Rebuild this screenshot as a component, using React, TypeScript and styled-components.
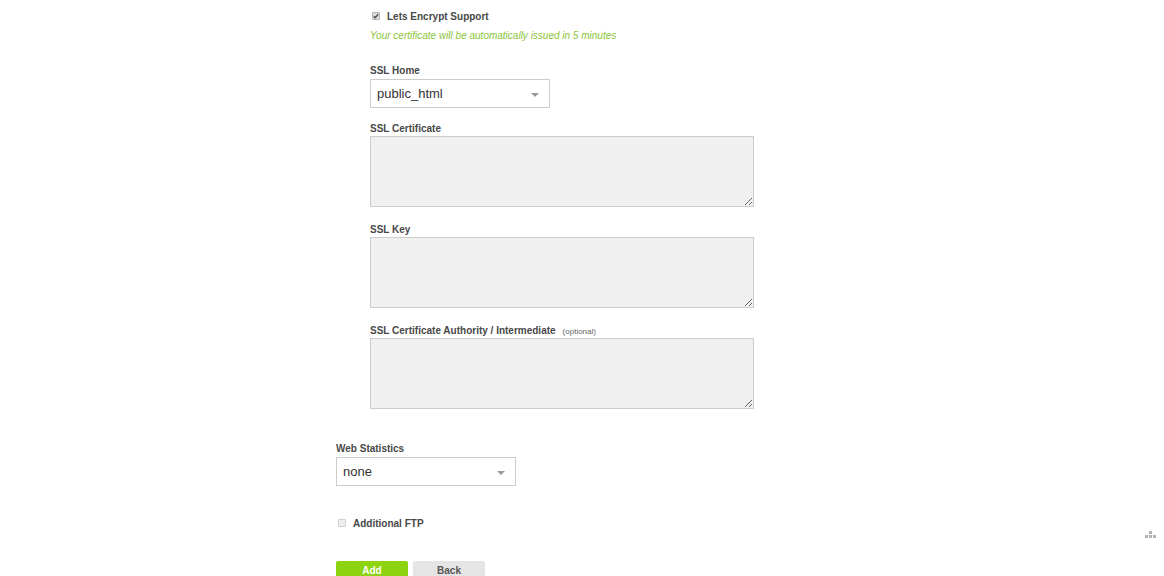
import * as React from 'react';
import styled, { createGlobalStyle } from 'styled-components';

const GlobalStyle = createGlobalStyle`
  html, body {
    margin: 0;
    padding: 0;
    background: #ffffff;
    font-family: "Liberation Sans", Arial, sans-serif;
    color: #444444;
  }
`;

const Page = styled.div`
  padding: 9px 0 40px 336px;
`;

const SslSection = styled.div`
  display: flex;
  flex-direction: column;
  padding-left: 34px;
  margin-bottom: 33px;
`;

const CheckRow = styled.label<{ $indent?: number }>`
  display: flex;
  align-items: center;
  gap: 7px;
  height: 14px;
  padding-left: ${({ $indent }) => $indent ?? 2}px;
  font-size: 10px;
  font-weight: bold;
  color: #484848;
`;

const CheckBox = styled.span<{ $checked?: boolean }>`
  position: relative;
  display: inline-flex;
  align-items: center;
  justify-content: center;
  width: 8px;
  height: 8px;
  box-sizing: border-box;
  border: 1px solid ${({ $checked }) => ($checked ? '#b5b5b5' : '#cfcfcf')};
  border-radius: 1px;
  background: ${({ $checked }) => ($checked ? '#dcdcdc' : '#eeeeee')};
`;

const Hint = styled.div`
  margin-top: 7px;
  font-size: 10px;
  line-height: 12px;
  font-style: italic;
  color: #8cc43a;
`;

const Field = styled.div<{ $top: number }>`
  display: flex;
  flex-direction: column;
  margin-top: ${({ $top }) => $top}px;
`;

const Label = styled.div`
  font-size: 10px;
  line-height: 12px;
  font-weight: bold;
  color: #484848;
  padding-top: 1px;
  margin-bottom: 1px;
`;

const Optional = styled.span`
  margin-left: 7px;
  font-size: 8px;
  line-height: 0;
  font-weight: normal;
  color: #666666;
`;

const SelectBox = styled.div`
  position: relative;
  display: flex;
  align-items: center;
  width: 180px;
  height: 29px;
  margin-top: 1px;
  box-sizing: border-box;
  padding-left: 6px;
  border: 1px solid #cccccc;
  background: #ffffff;
  font-size: 13px;
  color: #333333;
`;

const Caret = styled.span`
  position: absolute;
  right: 10px;
  top: 13px;
  width: 0;
  height: 0;
  border-left: 4px solid transparent;
  border-right: 4px solid transparent;
  border-top: 4px solid #999999;
`;

const TextArea = styled.textarea`
  display: block;
  width: 384px;
  height: 71px;
  box-sizing: border-box;
  margin: 0;
  border: 1px solid #cccccc;
  background: #f0f0f0;
  resize: both;
  font-family: "Liberation Sans", Arial, sans-serif;
`;

const Buttons = styled.div`
  display: flex;
  gap: 5px;
  margin-top: 31px;
`;

const Button = styled.button<{ $variant: 'primary' | 'secondary' }>`
  width: 72px;
  height: 22px;
  border: none;
  border-radius: 2px;
  padding: 4px 0 0;
  font-family: "Liberation Sans", Arial, sans-serif;
  font-size: 10px;
  font-weight: bold;
  background: ${({ $variant }) => ($variant === 'primary' ? '#8dd30f' : '#e5e5e5')};
  color: ${({ $variant }) => ($variant === 'primary' ? '#ffffff' : '#555555')};
  display: flex;
  align-items: flex-start;
  justify-content: center;
`;

const DragHandle = styled.svg`
  position: fixed;
  right: 7px;
  bottom: 37px;
`;

const Check = () => (
  <svg width="6" height="6" viewBox="0 0 6 6">
    <path d="M0.8 3.2 L2.3 4.7 L5.2 1.2" fill="none" stroke="#444" strokeWidth="1.3" />
  </svg>
);

const Select = ({ value }: { value: string }) => (
  <SelectBox>
    {value}
    <Caret />
  </SelectBox>
);

const App = () => {
  return (
    <>
      <GlobalStyle />
      <Page>
        <SslSection>
          <CheckRow>
            <CheckBox $checked>
              <Check />
            </CheckBox>
            Lets Encrypt Support
          </CheckRow>
          <Hint>Your certificate will be automatically issued in 5 minutes</Hint>

          <Field $top={22}>
            <Label>SSL Home</Label>
            <Select value="public_html" />
          </Field>

          <Field $top={14}>
            <Label>SSL Certificate</Label>
            <TextArea />
          </Field>

          <Field $top={16}>
            <Label>SSL Key</Label>
            <TextArea />
          </Field>

          <Field $top={16}>
            <Label>
              SSL Certificate Authority / Intermediate
              <Optional>(optional)</Optional>
            </Label>
            <TextArea />
          </Field>
        </SslSection>

        <Field $top={0}>
          <Label>Web Statistics</Label>
          <Select value="none" />
        </Field>

        <Field $top={30}>
          <CheckRow>
            <CheckBox />
            Additional FTP
          </CheckRow>
        </Field>

        <Buttons>
          <Button type="button" $variant="primary">
            Add
          </Button>
          <Button type="button" $variant="secondary">
            Back
          </Button>
        </Buttons>
      </Page>

      <DragHandle width="12" height="8" viewBox="0 0 12 8">
        <rect x="4" y="0" width="3" height="3" fill="#b3b3b3" />
        <rect x="0" y="4" width="3" height="3" fill="#b3b3b3" />
        <rect x="4" y="4" width="3" height="3" fill="#b3b3b3" />
        <rect x="8" y="4" width="3" height="3" fill="#b3b3b3" />
      </DragHandle>
    </>
  );
};

export default App;
